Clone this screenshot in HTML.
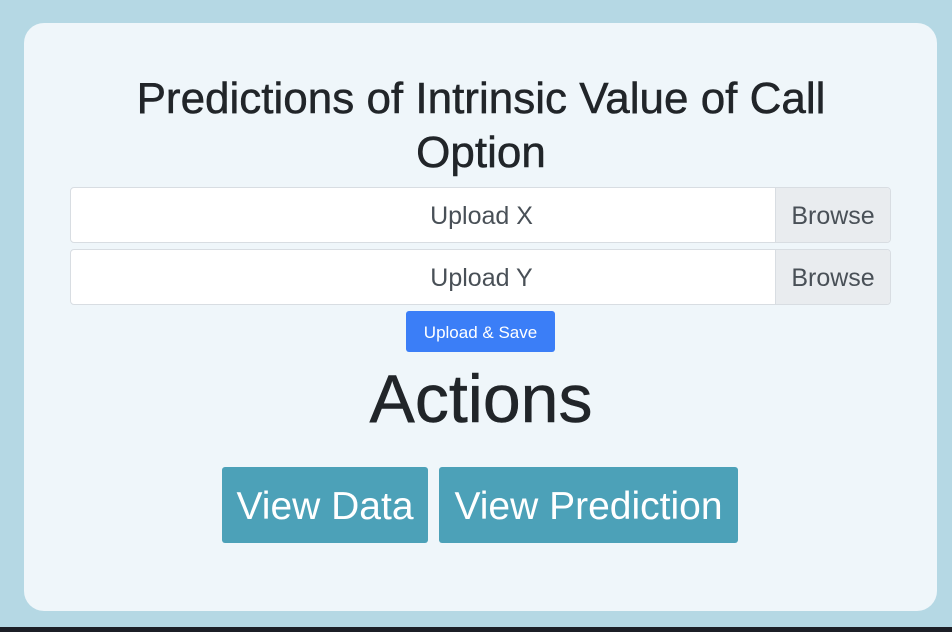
<!DOCTYPE html><html><head><style>
body{margin:0;width:952px;height:632px;background:#b5d8e4;font-family:"Liberation Sans",sans-serif;position:relative;overflow:hidden}
.card{position:absolute;left:24px;top:23px;width:913px;height:588px;background:#eff6fa;border-radius:20px}
.t{position:absolute;left:0;width:962px;text-align:center;color:#212529}
.in{position:absolute;left:70px;width:819px;height:54px;background:#fff;border:1px solid #d8dde2;border-radius:4px;overflow:hidden}
.in span{position:absolute;left:0;width:821px;top:0;line-height:56px;text-align:center;font-size:25px;color:#495057}
.in b{position:absolute;right:0;top:0;width:114px;height:54px;background:#e9ecef;border-left:1px solid #d8dde2;font-weight:normal;font-size:25px;color:#495057;line-height:57px;text-align:center}
.btn{position:absolute;background:#4ca1b8;color:#fff;font-size:39px;text-align:center;line-height:80px;border-radius:3px;top:467px;height:76px}
</style></head><body>
<div class="card"></div>
<div class="t" style="top:72px;font-size:44px;line-height:54px;-webkit-text-stroke:0.5px #212529">Predictions of Intrinsic Value of Call<br>Option</div>
<div class="in" style="top:187px"><span>Upload X</span><b>Browse</b></div>
<div class="in" style="top:249px"><span>Upload Y</span><b>Browse</b></div>
<div style="position:absolute;left:406px;top:311px;width:149px;height:41px;background:#3b7ef7;border-radius:3px;color:#fff;font-size:17px;text-align:center;line-height:43px">Upload &amp; Save</div>
<div class="t" style="top:359px;font-size:68px;line-height:80px;-webkit-text-stroke:0.5px #212529">Actions</div>
<div class="btn" style="left:222px;width:206px">View Data</div>
<div class="btn" style="left:439px;width:299px">View Prediction</div>
<div style="position:absolute;left:0;top:627px;width:952px;height:5px;background:#1c1f26"></div>
</body></html>
